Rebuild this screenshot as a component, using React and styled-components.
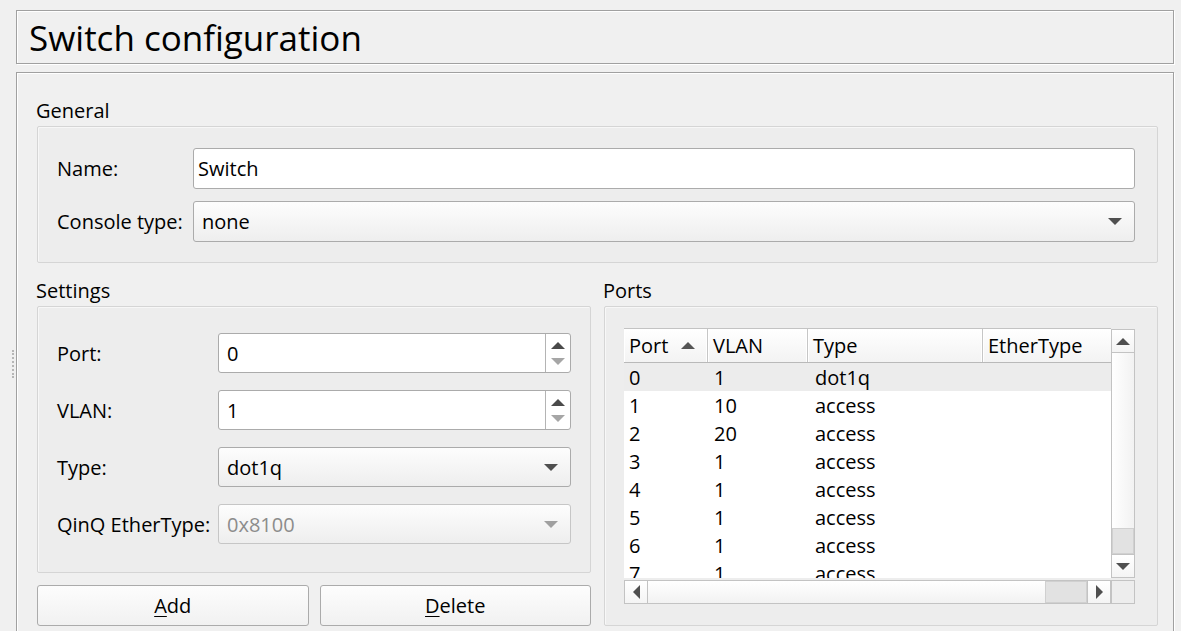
import React from 'react';
import styled, { createGlobalStyle } from 'styled-components';

const GlobalStyle = createGlobalStyle`
  html, body {
    margin: 0;
    padding: 0;
    background: #f0f0f0;
  }
  body {
    font-family: "Open Sans", "Noto Sans", sans-serif;
    font-size: 20px;
    color: #000000;
  }
  * {
    box-sizing: border-box;
  }
`;

const Page = styled.div`
  height: 631px;
  overflow: hidden;
  padding: 10px 7px 0 10px;
  display: flex;
  flex-direction: column;
  gap: 8px;
`;

const TitleFrame = styled.div`
  margin-left: 6px;
  height: 54px;
  flex-shrink: 0;
  display: flex;
  align-items: center;
  padding-left: 12px;
  border: 1px solid #a0a0a0;
  box-shadow: inset 1px 1px 0 #ffffff, 1px 1px 0 #ffffff;
  font-size: 35px;
  line-height: 1;
`;

const Body = styled.div`
  display: flex;
  align-items: flex-start;
`;

const SplitterHandle = styled.div`
  width: 4px;
  height: 28px;
  margin: 278px 0 0 2px;
  flex-shrink: 0;
  border-left: 2px dotted #b6b6b6;
`;

const MainFrame = styled.div`
  flex: 1;
  min-height: 580px;
  padding: 24px 15px 20px 20px;
  border: 1px solid #a0a0a0;
  box-shadow: inset 1px 1px 0 #ffffff, 1px 1px 0 #ffffff;
`;

const SectionLabel = styled.div`
  height: 26px;
  line-height: 27px;
  margin: 0 0 3px -1px;
  white-space: nowrap;
`;

const GroupBox = styled.div`
  border: 1px solid #d5d5d5;
  border-radius: 2px;
  background: #ededed;
  box-shadow: inset 1px 1px 0 #f7f7f7;
  padding: ${p => p.$pad};
  height: ${p => p.$height || 'auto'};
`;

const Form = styled.div`
  display: grid;
  grid-template-columns: ${p => p.$labelWidth}px 1fr;
  row-gap: ${p => p.$gap}px;
  align-items: center;
`;

const FieldLabel = styled.div`
  white-space: nowrap;
`;

const TextInput = styled.div`
  height: ${p => p.$h}px;
  display: flex;
  align-items: center;
  padding-left: 4px;
  background: #ffffff;
  border: 1px solid #ababab;
  border-radius: 3px;
`;

const Combo = styled.div`
  height: ${p => p.$h}px;
  display: flex;
  align-items: center;
  justify-content: space-between;
  padding: 0 12px 0 8px;
  border: 1px solid ${p => (p.$disabled ? '#c6c6c6' : '#ababab')};
  border-radius: 3px;
  background: linear-gradient(#fdfdfd, #eeeeee);
  color: ${p => (p.$disabled ? '#8c8c8c' : '#000000')};
`;

const DownArrow = styled.span`
  width: 0;
  height: 0;
  border-left: 7px solid transparent;
  border-right: 7px solid transparent;
  border-top: 7px solid ${p => p.$color || '#4f4f4f'};
`;

const UpArrow = styled.span`
  width: 0;
  height: 0;
  border-left: 7px solid transparent;
  border-right: 7px solid transparent;
  border-bottom: 7px solid ${p => p.$color || '#4f4f4f'};
`;

const SideArrow = styled.span`
  width: 0;
  height: 0;
  border-top: 7px solid transparent;
  border-bottom: 7px solid transparent;
  ${p => (p.$dir === 'left'
    ? 'border-right: 7px solid #4f4f4f;'
    : 'border-left: 7px solid #4f4f4f;')}
`;

const Spin = styled.div`
  height: 40px;
  display: flex;
  background: #ffffff;
  border: 1px solid #ababab;
  border-radius: 3px;
`;

const SpinText = styled.div`
  flex: 1;
  display: flex;
  align-items: center;
  padding-left: 8px;
`;

const SpinButtons = styled.div`
  width: 25px;
  border-left: 1px solid #b4b4b4;
  display: flex;
  flex-direction: column;
  align-items: center;
  justify-content: center;
  gap: 9px;
`;

const Columns = styled.div`
  margin-top: 14px;
  display: grid;
  grid-template-columns: 1fr 1fr;
  column-gap: 13px;
`;

const Column = styled.div`
  display: flex;
  flex-direction: column;
`;

const ButtonRow = styled.div`
  margin-top: 12px;
  display: grid;
  grid-template-columns: 1fr 1fr;
  column-gap: 11px;
`;

const PushButton = styled.div`
  height: 41px;
  display: flex;
  align-items: center;
  justify-content: center;
  border: 1px solid #ababab;
  border-radius: 3px;
  background: linear-gradient(#fdfdfd, #f1f1f1);
`;

const Mnemonic = styled.span`
  text-decoration: underline;
  text-underline-offset: 3px;
  text-decoration-thickness: 1px;
`;

const TableView = styled.div`
  height: 276px;
  display: grid;
  grid-template-columns: 1fr 24px;
  grid-template-rows: 1fr 24px;
  row-gap: 2px;
`;

const Viewport = styled.div`
  overflow: hidden;
  background: #ffffff;
`;

const HeaderRow = styled.div`
  display: flex;
  height: 35px;
  border-top: 1px solid #c3c3c3;
  border-bottom: 1px solid #b9b9b9;
  background: linear-gradient(#ffffff, #f3f3f3);
`;

const HeaderCell = styled.div`
  width: ${p => p.$w}px;
  flex-shrink: 0;
  display: flex;
  align-items: center;
  justify-content: space-between;
  padding: 0 12px 0 5px;
  border-right: 1px solid #c6c6c6;
  box-shadow: inset -1px 0 0 #ffffff, inset 1px 0 0 #ffffff;
`;

const Row = styled.div`
  display: flex;
  height: 28px;
  align-items: center;
  background: ${p => (p.$selected ? '#ececec' : '#ffffff')};
`;

const Cell = styled.div`
  width: ${p => p.$w}px;
  flex-shrink: 0;
  padding-left: ${p => p.$pad}px;
  white-space: nowrap;
`;

const VScroll = styled.div`
  display: flex;
  flex-direction: column;
  margin-top: 1px;
  border: 1px solid #c3c3c3;
  background: linear-gradient(90deg, #ffffff, #f2f2f2);
`;

const HScroll = styled.div`
  display: flex;
  border: 1px solid #c3c3c3;
  background: linear-gradient(#ffffff, #f2f2f2);
`;

const ScrollButton = styled.div`
  flex-shrink: 0;
  width: ${p => (p.$vertical ? 'auto' : '23px')};
  height: ${p => (p.$vertical ? '23px' : 'auto')};
  display: flex;
  align-items: center;
  justify-content: center;
  background: linear-gradient(#ffffff, #f4f4f4);
  ${p => p.$edge}: 1px solid #c3c3c3;
`;

const Track = styled.div`
  flex: 1;
`;

const Handle = styled.div`
  flex-shrink: 0;
  ${p => (p.$vertical ? 'height: 26px;' : 'width: 42px;')}
  background: #e2e2e2;
  border: 1px solid #d0d0d0;
`;

const Corner = styled.div`
  border: 1px solid #c3c3c3;
`;

const columns = [
  { title: 'Port', w: 84 },
  { title: 'VLAN', w: 100 },
  { title: 'Type', w: 175 },
  { title: 'EtherType', w: 140 },
];

const ports = [
  ['0', '1', 'dot1q'],
  ['1', '10', 'access'],
  ['2', '20', 'access'],
  ['3', '1', 'access'],
  ['4', '1', 'access'],
  ['5', '1', 'access'],
  ['6', '1', 'access'],
  ['7', '1', 'access'],
  ['8', '1', 'access'],
];

function PortTable() {
  return (
    <TableView>
      <Viewport>
        <HeaderRow>
          {columns.map((c, i) => (
            <HeaderCell key={c.title} $w={c.w}>
              <span>{c.title}</span>
              {i === 0 && <UpArrow $color="#555555" />}
            </HeaderCell>
          ))}
        </HeaderRow>
        {ports.map((p, i) => (
          <Row key={p[0]} $selected={i === 0}>
            <Cell $w={84} $pad={5}>{p[0]}</Cell>
            <Cell $w={100} $pad={6}>{p[1]}</Cell>
            <Cell $w={175} $pad={7}>{p[2]}</Cell>
            <Cell $w={140} $pad={6} />
          </Row>
        ))}
      </Viewport>
      <VScroll>
        <ScrollButton $vertical $edge="border-bottom"><UpArrow /></ScrollButton>
        <Track />
        <Handle $vertical />
        <ScrollButton $vertical $edge="border-top"><DownArrow /></ScrollButton>
      </VScroll>
      <HScroll>
        <ScrollButton $edge="border-right"><SideArrow $dir="left" /></ScrollButton>
        <Track />
        <Handle />
        <ScrollButton $edge="border-left"><SideArrow $dir="right" /></ScrollButton>
      </HScroll>
      <Corner />
    </TableView>
  );
}

function SpinBox({ value }) {
  return (
    <Spin>
      <SpinText>{value}</SpinText>
      <SpinButtons>
        <UpArrow $color="#4a4a4a" />
        <DownArrow $color="#a6a6a6" />
      </SpinButtons>
    </Spin>
  );
}

export default function App() {
  return (
    <>
      <GlobalStyle />
      <Page>
        <TitleFrame>Switch configuration</TitleFrame>
        <Body>
          <SplitterHandle />
          <MainFrame>
            <SectionLabel>General</SectionLabel>
            <GroupBox $pad="21px 22px 20px 19px">
              <Form $labelWidth={136} $gap={12}>
                <FieldLabel>Name:</FieldLabel>
                <TextInput $h={41}>Switch</TextInput>
                <FieldLabel>Console type:</FieldLabel>
                <Combo $h={41}>
                  <span>none</span>
                  <DownArrow />
                </Combo>
              </Form>
            </GroupBox>

            <Columns>
              <Column>
                <SectionLabel>Settings</SectionLabel>
                <GroupBox $pad="26px 19px 28px 19px" $height="267px">
                  <Form $labelWidth={161} $gap={17}>
                    <FieldLabel>Port:</FieldLabel>
                    <SpinBox value="0" />
                    <FieldLabel>VLAN:</FieldLabel>
                    <SpinBox value="1" />
                    <FieldLabel>Type:</FieldLabel>
                    <Combo $h={40}>
                      <span>dot1q</span>
                      <DownArrow />
                    </Combo>
                    <FieldLabel>QinQ EtherType:</FieldLabel>
                    <Combo $h={40} $disabled>
                      <span>0x8100</span>
                      <DownArrow $color="#a0a0a0" />
                    </Combo>
                  </Form>
                </GroupBox>
                <ButtonRow>
                  <PushButton><Mnemonic>A</Mnemonic>dd</PushButton>
                  <PushButton><Mnemonic>D</Mnemonic>elete</PushButton>
                </ButtonRow>
              </Column>
              <Column>
                <SectionLabel>Ports</SectionLabel>
                <GroupBox $pad="21px 22px 21px 19px" $height="320px">
                  <PortTable />
                </GroupBox>
              </Column>
            </Columns>
          </MainFrame>
        </Body>
      </Page>
    </>
  );
}
